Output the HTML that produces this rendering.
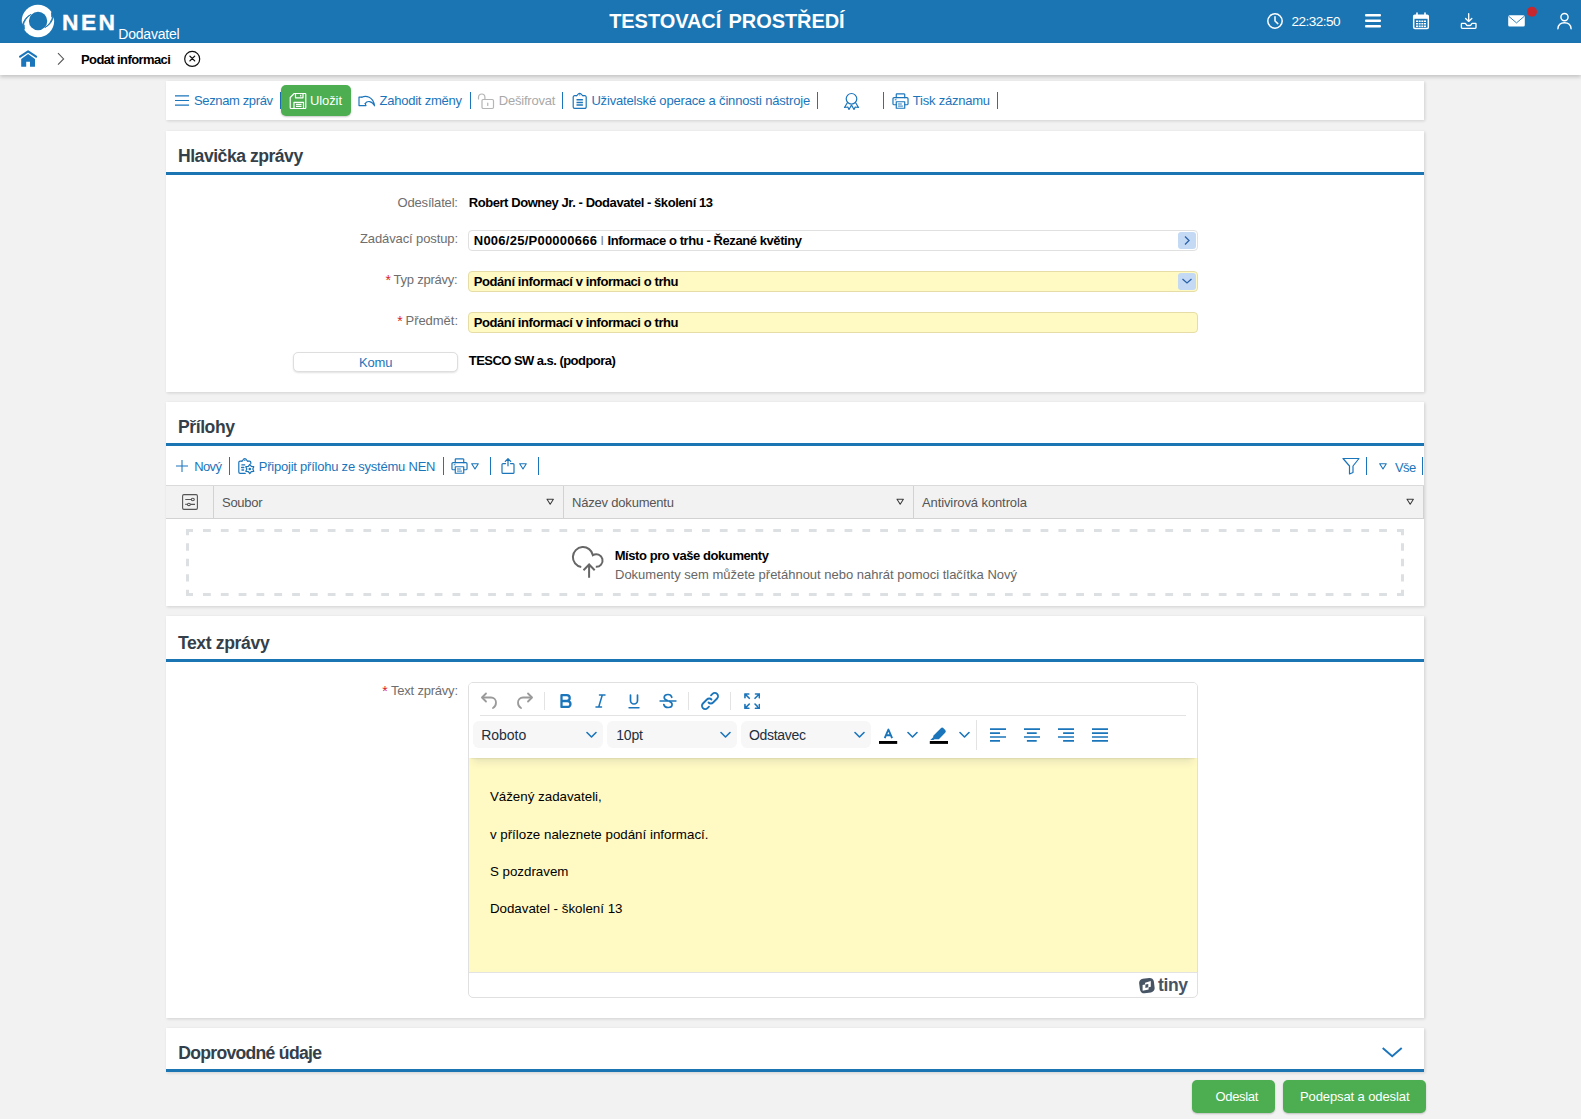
<!DOCTYPE html>
<html lang="cs"><head><meta charset="utf-8"><title>NEN - Podat informaci</title>
<style>
html,body{margin:0;padding:0}
body{width:1581px;height:1119px;overflow:hidden;background:#f2f2f2;font-family:"Liberation Sans",sans-serif;font-size:13px;position:relative}
.t{position:absolute;white-space:nowrap;line-height:20px;display:block}
.abs,svg.i,.sep{position:absolute}
.hdr{left:0;top:0;width:1581px;height:43px;background:#1b75b3}
.bc{left:0;top:43px;width:1581px;height:32px;background:#fff;box-shadow:0 2px 4px rgba(0,0,0,.2)}
.panel{left:166px;width:1258px;background:#fff;box-shadow:1px 1px 3px rgba(0,0,0,.14)}
.line{left:166px;width:1258px;height:3px;background:#1b75b3}
.sep{width:1px;background:#1b75bb}
.inp{left:468px;width:728px;height:19px;border:1px solid #e0e0e0;border-radius:4px;background:#fff}
.inp.y{background:#fff9c4;border-color:#e6dda6}
.arr{width:18px;height:17px;border-radius:3px;background:#c3d9f4}
.btn{background:#4cae50;border-radius:5px;box-shadow:0 1px 2px rgba(0,0,0,.22)}
.th{top:485px;height:34px;background:#f2f2f2;border-top:1px solid #dadada;border-bottom:1px solid #d2d2d2;box-sizing:border-box}
.dd{top:721px;height:27px;background:#f7f7f7;border-radius:6px}
.tsep{width:1px;background:#e3e3e3}
</style></head><body>
<div class="abs hdr"></div>
<div class="abs bc"></div>

<!-- logo -->
<svg class="i" style="left:21px;top:4px" width="34" height="34" viewBox="0 0 34 34">
<circle cx="16.96" cy="16.96" r="16.2" fill="#fff"/>
<circle cx="17.06" cy="16.96" r="9.2" fill="#1b75b3"/>
<path d="M0.300 22.300 L1.100 21.800 C2.300 17.500 5 12.500 9.800 10.500 C5.500 13 3.300 17.500 1.900 22 L1 23z" fill="#1b75b3" stroke="#1b75b3" stroke-width=".9"/>
<path d="M33.600 11.600 L32.800 12.100 C31.600 16.400 28.900 21.400 24.100 23.400 C28.400 20.900 30.600 16.400 32 11.900 L32.900 10.900z" fill="#1b75b3" stroke="#1b75b3" stroke-width=".9"/>
<path d="M1.300 21.800L3.600 20.500L3.900 25.800L1.700 24.600L0.500 22.500z" fill="#1b75b3"/>
<path d="M32.620 12.100L30.300 13.400L30 8.100L32.200 9.300L33.400 11.400z" fill="#1b75b3"/>
</svg>

<!-- header icons -->
<svg class="i" style="left:1266px;top:12px" width="18" height="18" viewBox="0 0 18 18" fill="none" stroke="#fff" stroke-width="1.5" stroke-linecap="round"><circle cx="9" cy="9" r="7.2"/><path d="M9 4.8V9l2.8 2.6"/></svg>
<svg class="i" style="left:1365px;top:14px" width="16" height="14" viewBox="0 0 16 14" fill="#fff"><rect x="0" y="0" width="16" height="2.6" rx="1"/><rect x="0" y="5.5" width="16" height="2.6" rx="1"/><rect x="0" y="11" width="16" height="2.6" rx="1"/></svg>
<svg class="i" style="left:1412px;top:12px" width="18" height="18" viewBox="0 0 18 18" fill="none" stroke="#fff"><rect x="1.7" y="3.2" width="14.6" height="13.3" rx="1.2" stroke-width="1.5"/><rect x="1.7" y="3.2" width="14.6" height="3.6" fill="#fff" stroke="none"/><path d="M5 1v4M13 1v4" stroke-width="1.6" stroke-linecap="round"/><path d="M4 9.3h10M4 11.8h10M4 14.3h10" stroke-width="1.5"/><path d="M6.5 8v7.5M9 8v7.5M11.5 8v7.5" stroke="#1b75b3" stroke-width=".7"/></svg>
<svg class="i" style="left:1460px;top:12px" width="18" height="18" viewBox="0 0 18 18" fill="none" stroke="#fff" stroke-width="1.350" stroke-linecap="round" stroke-linejoin="round"><path d="M8.700 1.700v7.400M5.600 6.400L8.700 9.400L11.800 6.400"/><path d="M1.900 11.400h3.200c.9 0 1.100 2.100 2.400 2.100h2.400c1.300 0 1.500-2.100 2.400-2.100h3.200c.3 0 .5.200.5.500v3.700c0 .5-.3.800-.8.800H2.200c-.5 0-.8-.3-.8-.8v-3.700c0-.3.200-.5.500-.5z"/></svg>
<svg class="i" style="left:1508px;top:15px" width="18" height="12" viewBox="0 0 18 12"><rect x=".2" y=".3" width="16.600" height="11.200" rx="1.500" fill="#fff"/><path d="M.6 1.200l7.900 6.700 7.900-6.700" stroke="#1b75b3" stroke-width=".9" fill="none"/></svg>
<svg class="i" style="left:1526px;top:6px" width="12" height="12" viewBox="0 0 12 12"><circle cx="6" cy="5.8" r="5" fill="#c8272d"/></svg>
<svg class="i" style="left:1556px;top:12px" width="18" height="18" viewBox="0 0 18 18" fill="none" stroke="#fff" stroke-width="1.400" stroke-linecap="round"><circle cx="8.500" cy="5.100" r="3.600"/><path d="M1.900 16.700c.3-4 3-6 6.600-6s6.300 2 6.600 6"/></svg>

<!-- breadcrumb icons -->
<svg class="i" style="left:19px;top:50px" width="19" height="17" viewBox="0 0 19 17"><path d="M1.100 6.700L9.100 1.300L17.100 6.700" fill="none" stroke="#1b75bb" stroke-width="2.100" stroke-linecap="round" stroke-linejoin="round"/><path d="M2.200 8.900L9.100 4.100L16 8.900V16.200a.6.600 0 0 1-.6.600H11V11.700H7.200V16.800H2.800a.6.600 0 0 1-.6-.600z" fill="#1b75bb"/></svg>
<svg class="i" style="left:56px;top:52px" width="10" height="14" viewBox="0 0 10 14" fill="none" stroke="#555" stroke-width="1.100"><path d="M2 1.200l5.600 5.700L2 12.600"/></svg>
<svg class="i" style="left:183px;top:50px" width="18" height="18" viewBox="0 0 18 18" fill="none" stroke="#111" stroke-linecap="round"><circle cx="9.200" cy="8.900" r="7.500" stroke-width="1.200"/><path d="M6.900 6.100l4.800 4.800M11.700 6.100l-4.800 4.800" stroke-width="1.300"/></svg>

<!-- toolbar panel -->
<div class="abs panel" style="top:81px;height:39px"></div>
<svg class="i" style="left:175px;top:95px" width="14" height="11" viewBox="0 0 14 11" stroke="#1b75bb" stroke-width="1.200"><path d="M0 .8h14M0 5.500h14M0 10.200h14"/></svg>
<div class="sep" style="left:280px;top:92px;height:17px"></div>
<div class="abs btn" style="left:281px;top:85px;width:70px;height:31px"></div>
<svg class="i" style="left:289px;top:92px" width="18" height="18" viewBox="0 0 18 18" fill="none" stroke="#fff" stroke-width="1.200" stroke-linejoin="round"><path d="M5.200 1.500H16a.8.8 0 0 1 .8.800V15.700a.8.8 0 0 1-.8.800H2a.8.8 0 0 1-.8-.800V5.500z"/><path d="M6.500 1.500v4.300h7.500V1.500M11.700 2.700v1.900"/><path d="M5 16.500V10.300h9.500v6.200M7 12.300h5.500M7 14.300h5.500"/></svg>
<svg class="i" style="left:358px;top:95px" width="18" height="13" viewBox="0 0 18 13" fill="none" stroke="#1b75bb" stroke-width="1.200" stroke-linejoin="round" stroke-linecap="round"><path d="M3.800 2.200L1 2.100V10.600H8L7.200 8.600"/><path d="M3.800 2.200C8 0.300 15 1.500 16.600 10.800C14 5.500 9 5.500 7.200 8.600"/></svg>
<div class="sep" style="left:469.500px;top:92px;height:17px"></div>
<svg class="i" style="left:477px;top:92px" width="18" height="18" viewBox="0 0 18 18" fill="none" stroke="#b5b5b5" stroke-width="1.200" stroke-linecap="round"><rect x="5" y="7.500" width="11.500" height="9" rx="1.200"/><path d="M1.500 7V5.200a3.200 3.200 0 0 1 6.400 0V7.500M10.750 11v2.500"/></svg>
<div class="sep" style="left:562px;top:92px;height:17px"></div>
<svg class="i" style="left:572px;top:92px" width="16" height="18" viewBox="0 0 16 18" fill="none" stroke="#1b75bb" stroke-width="1.200" stroke-linejoin="round" stroke-linecap="round"><path d="M4.400 3.700H2.600a1.400 1.400 0 0 0-1.400 1.400V15a1.400 1.400 0 0 0 1.400 1.400H12.800a1.400 1.400 0 0 0 1.400-1.400V5.100a1.400 1.400 0 0 0-1.400-1.400H11"/><path d="M4.400 3.700C5.700 3.700 5.500 1.300 7.700 1.300S9.700 3.700 11 3.700"/><path d="M4.500 7.700h6.400M4.500 10.400h6.400M4.500 13.100h6.400" stroke-width="1.500" stroke-linecap="butt"/><path d="M7.400 2.900h.6" stroke-width=".9"/></svg>
<div class="sep" style="left:817px;top:92px;height:17px"></div>
<svg class="i" style="left:843px;top:92px" width="17" height="18" viewBox="0 0 17 18" fill="none" stroke="#1b75bb" stroke-width="1.200" stroke-linejoin="round"><circle cx="8.500" cy="6.800" r="5.300"/><path d="M4.500 10.500L1.500 15.500l3.300-.5 1.200 2.500 2.500-4.500M12.500 10.500l3 5-3.300-.5-1.200 2.500-2.500-4.500"/></svg>
<div class="sep" style="left:883px;top:92px;height:17px"></div>
<svg class="i" style="left:891.500px;top:93px" width="17" height="16" viewBox="0 0 18 17" fill="none" stroke="#1b75bb" stroke-width="1.250" stroke-linejoin="round" stroke-linecap="round"><path d="M4.500 5V1.600a.6.600 0 0 1 .6-.600h7.800a.6.600 0 0 1 .6.600V5"/><path d="M4.500 12.500H2.200a1.200 1.200 0 0 1-1.200-1.200V6.200A1.200 1.200 0 0 1 2.200 5h13.600a1.200 1.200 0 0 1 1.200 1.200v5.100a1.200 1.200 0 0 1-1.200 1.200H13.500"/><path d="M4.500 9.300h9v6.900h-9z"/><path d="M6.800 11.700h3.200M6.800 13.900h4.400M3.300 7.200h1" stroke-width="1"/></svg>
<div class="sep" style="left:997px;top:92px;height:17px"></div>

<!-- panel 1 -->
<div class="abs panel" style="top:131px;height:261px"></div>
<div class="abs line" style="top:172px"></div>
<div class="abs inp" style="top:230px"></div>
<div class="abs arr" style="left:1178px;top:232px"></div>
<svg class="i" style="left:1183px;top:235px" width="8" height="11" viewBox="0 0 8 11" fill="none" stroke="#2a62a8" stroke-width="1.300"><path d="M2 1.500l4 4-4 4"/></svg>
<div class="abs inp y" style="top:271px"></div>
<div class="abs arr" style="left:1178px;top:273px"></div>
<svg class="i" style="left:1181px;top:277px" width="12" height="8" viewBox="0 0 12 8" fill="none" stroke="#2a62a8" stroke-width="1.300"><path d="M1.500 2l4.500 4 4.500-4"/></svg>
<div class="abs inp y" style="top:312px"></div>
<div class="abs" style="left:293px;top:352px;width:163px;height:18px;border:1px solid #dedede;border-radius:5px;background:#fff;box-shadow:0 1px 2px rgba(0,0,0,.12)"></div>

<!-- panel 2 -->
<div class="abs panel" style="top:402px;height:204px"></div>
<div class="abs line" style="top:443px"></div>
<svg class="i" style="left:175.500px;top:459.500px" width="12" height="12" viewBox="0 0 12 12" stroke="#1b75bb" stroke-width="1.050"><path d="M6 0v12M0 6h12"/></svg>
<div class="sep" style="left:229px;top:457px;height:18px"></div>
<svg class="i" style="left:237px;top:457px" width="18" height="18" viewBox="0 0 18 18" fill="none" stroke="#1b75bb" stroke-width="1.200" stroke-linejoin="round" stroke-linecap="round"><path d="M4.800 4.200H3.100a1.300 1.300 0 0 0-1.300 1.300V15a1.300 1.300 0 0 0 1.300 1.300h5.200M10.800 4.200h1.700a1.300 1.300 0 0 1 1.300 1.300V6.500"/><path d="M4.800 4.200C6 4.200 5.700 1.600 7.800 1.600S9.600 4.200 10.800 4.200"/><path d="M4.900 7.900h2.800M4.600 10.500h2.200M4.900 13h1.700" stroke-width="1.300"/><path d="M7.400 3.200h.8" stroke-width="1"/><path d="M12.80 7.40L11.30 9.40L8.82 9.70L9.80 12.00L8.82 14.30L11.30 14.60L12.80 16.60L14.30 14.60L16.78 14.30L15.80 12.00L16.78 9.70L14.30 9.40z" stroke-width="1.200"/><circle cx="12.8" cy="12.0" r="1.300" fill="#1b75bb" stroke="none"/></svg>
<div class="sep" style="left:443px;top:457px;height:18px"></div>
<svg class="i" style="left:451px;top:458px" width="17" height="16" viewBox="0 0 18 17" fill="none" stroke="#1b75bb" stroke-width="1.250" stroke-linejoin="round" stroke-linecap="round"><path d="M4.500 5V1.600a.6.600 0 0 1 .6-.600h7.800a.6.600 0 0 1 .6.600V5"/><path d="M4.500 12.500H2.200a1.200 1.200 0 0 1-1.200-1.200V6.200A1.200 1.200 0 0 1 2.200 5h13.600a1.200 1.200 0 0 1 1.200 1.200v5.100a1.200 1.200 0 0 1-1.200 1.200H13.500"/><path d="M4.500 9.300h9v6.900h-9z"/><path d="M6.800 11.700h3.200M6.800 13.900h4.400M3.300 7.200h1" stroke-width="1"/></svg>
<svg class="i" style="left:471.2px;top:463px" width="8" height="7" viewBox="0 0 8 7" fill="none" stroke="#1b75bb" stroke-width="1.100" stroke-linejoin="round"><path d="M.7.700h6.600L4 6z"/></svg>
<div class="sep" style="left:490px;top:457px;height:18px"></div>
<svg class="i" style="left:501px;top:458px" width="14" height="17" viewBox="0 0 14 17" fill="none" stroke="#1b75bb" stroke-width="1.200" stroke-linejoin="round" stroke-linecap="round"><path d="M4.500 5.600H2a1 1 0 0 0-1 1V14.400a1 1 0 0 0 1 1H12a1 1 0 0 0 1-1V6.600a1 1 0 0 0-1-1H9.500"/><path d="M7 7.800V.9M4.300 3.400L7 .700L9.700 3.400"/></svg>
<svg class="i" style="left:519.3px;top:463px" width="8" height="7" viewBox="0 0 8 7" fill="none" stroke="#1b75bb" stroke-width="1.100" stroke-linejoin="round"><path d="M.7.700h6.600L4 6z"/></svg>
<div class="sep" style="left:538px;top:457px;height:18px"></div>
<!-- right side filter -->
<svg class="i" style="left:1342px;top:457px" width="18" height="18" viewBox="0 0 18 18" fill="none" stroke="#1b75bb" stroke-width="1.200" stroke-linejoin="round"><path d="M1 1.500h16L11 9v6.500L7.500 17V9z"/></svg>
<div class="sep" style="left:1366px;top:457px;height:18px"></div>
<svg class="i" style="left:1379px;top:463px" width="8" height="7" viewBox="0 0 8 7" fill="none" stroke="#1b75bb" stroke-width="1.100" stroke-linejoin="round"><path d="M.7.700h6.600L4 6z"/></svg>
<div class="sep" style="left:1422px;top:457px;height:18px"></div>
<!-- table header -->
<div class="abs th" style="left:166px;width:1258px"></div>
<div class="abs" style="left:213px;top:486px;width:1px;height:32px;background:#d2d2d2"></div>
<div class="abs" style="left:563px;top:486px;width:1px;height:32px;background:#d2d2d2"></div>
<div class="abs" style="left:913px;top:486px;width:1px;height:32px;background:#d2d2d2"></div>
<div class="abs" style="left:1423px;top:486px;width:1px;height:32px;background:#d2d2d2"></div>
<svg class="i" style="left:182px;top:494px" width="16" height="16" viewBox="0 0 16 16" fill="none" stroke="#555" stroke-width="1.100"><rect x=".6" y=".6" width="14.800" height="14.800" rx="1.300"/><path d="M3.300 5.500h6M3.300 10.400h1.500M8.400 10.400h4.600"/><ellipse cx="10.800" cy="5.500" rx="1.500" ry="1.200"/><ellipse cx="6.900" cy="10.400" rx="1.500" ry="1.200"/></svg>
<svg class="i" style="left:545.6px;top:498px" width="9" height="8" viewBox="0 0 9 8" fill="none" stroke="#3c3c3c" stroke-width="1.050" stroke-linejoin="round"><path d="M1 1.200h6.400L4.200 6.300z"/></svg>
<svg class="i" style="left:895.6px;top:498px" width="9" height="8" viewBox="0 0 9 8" fill="none" stroke="#3c3c3c" stroke-width="1.050" stroke-linejoin="round"><path d="M1 1.200h6.400L4.200 6.300z"/></svg>
<svg class="i" style="left:1405.6px;top:498px" width="9" height="8" viewBox="0 0 9 8" fill="none" stroke="#3c3c3c" stroke-width="1.050" stroke-linejoin="round"><path d="M1 1.200h6.400L4.200 6.300z"/></svg>
<!-- dropzone -->
<svg class="i" style="left:186px;top:529px" width="1218" height="67" viewBox="0 0 1218 67" fill="none" stroke="#dde0e3" stroke-width="3"><path d="M0 1.500H1218" stroke-dasharray="7.800 10.020" stroke-dashoffset=".8"/><path d="M0 65.500H1218" stroke-dasharray="7.800 10.020" stroke-dashoffset=".8"/><path d="M1.500 0V67" stroke-dasharray="7.400 8.070" stroke-dashoffset="1.200"/><path d="M1216.500 0V67" stroke-dasharray="7.400 8.070" stroke-dashoffset="1.200"/></svg>
<svg class="i" style="left:570px;top:545px" width="36" height="35" viewBox="0 0 36 35" fill="none" stroke="#666" stroke-width="2" stroke-linejoin="miter"><path d="M11.250 22.100A10.100 10.100 0 1 1 22.900 10.200A6.300 6.300 0 1 1 25.800 21.800"/><path d="M19.100 32.800V19.800M13.500 25.200L19.100 19.500L24.700 25.200"/></svg>

<!-- panel 3 -->
<div class="abs panel" style="top:616px;height:402px"></div>
<div class="abs line" style="top:659px"></div>
<div class="abs" style="left:468px;top:682px;width:728px;height:314px;border:1px solid #e0e0e0;border-radius:5px;background:#fff;overflow:hidden">
  <div class="abs" style="left:0;top:75px;width:728px;height:214px;background:#fff9c4"></div>
  <div class="abs" style="left:0;top:289px;width:728px;height:1px;background:#e3e3e3"></div>
  <div class="abs" style="left:0;top:0;width:728px;height:75px;background:#fff;box-shadow:0 2px 2px -2px rgba(34,47,62,.2),0 8px 8px -4px rgba(34,47,62,.1)"></div>
</div>
<div class="abs" style="left:480px;top:715px;width:706px;height:1px;background:#e3e3e3"></div>
<!-- row1 icons -->
<svg class="i" style="left:480px;top:691px" width="19" height="19" viewBox="0 0 19 19" fill="none" stroke="#9a9a9a" stroke-width="1.800" stroke-linecap="round" stroke-linejoin="round"><path d="M6 2.500L2 6.500l4 4"/><path d="M2.500 6.500h8.500a5 5 0 0 1 5 5c0 2.500-1.200 4.500-3 5.500"/></svg>
<svg class="i" style="left:515px;top:691px" width="19" height="19" viewBox="0 0 19 19" fill="none" stroke="#9a9a9a" stroke-width="1.800" stroke-linecap="round" stroke-linejoin="round"><path d="M13 2.500l4 4-4 4"/><path d="M16.500 6.500H8a5 5 0 0 0-5 5c0 2.500 1.200 4.500 3 5.500"/></svg>
<div class="abs tsep" style="left:544px;top:692px;height:18px"></div>
<svg class="i" style="left:560px;top:694px" width="13" height="14" viewBox="0 0 13 14" fill="none" stroke="#1b75bb" stroke-width="2.300" stroke-linejoin="round"><path d="M1.500 1.200h5.300a2.900 2.900 0 0 1 0 5.800H1.500zM1.500 7h6a3 3 0 0 1 0 6h-6z"/></svg>
<svg class="i" style="left:595px;top:694px" width="11" height="14" viewBox="0 0 11 14" fill="none" stroke="#1b75bb" stroke-width="1.500" stroke-linecap="round"><path d="M4.500 1h5.500M1 13h5.500M7.300 1L3.700 13"/></svg>
<svg class="i" style="left:628px;top:694px" width="12" height="15" viewBox="0 0 12 15" fill="none" stroke="#1b75bb" stroke-width="1.700" stroke-linecap="round"><path d="M2.500 1v5.500a3.500 3.500 0 0 0 7 0V1"/><path d="M1 13.700h10" stroke-width="1.400"/></svg>
<svg class="i" style="left:659px;top:693px" width="18" height="16" viewBox="0 0 18 16" fill="none" stroke="#1b75bb" stroke-width="1.700" stroke-linecap="round"><path d="M12.800 4.300C12.300 2.300 10.800 1.500 9 1.500c-2.200 0-3.800 1.200-3.800 3 0 1.500 1 2.300 3.300 3"/><path d="M10.500 8.500c1.800.7 2.600 1.600 2.600 3 0 1.900-1.700 3-4 3-2.200 0-3.900-1-4.300-3"/><path d="M1 8h16" stroke-width="1.400"/></svg>
<div class="abs tsep" style="left:688px;top:692px;height:18px"></div>
<svg class="i" style="left:700px;top:691px" width="20" height="20" viewBox="0 0 20 20" fill="none" stroke="#1b75bb" stroke-width="1.800" stroke-linecap="round"><path d="M8.500 11.500a3.200 3.200 0 0 0 4.600 0l4-4a3.200 3.200 0 0 0-4.600-4.600l-1.500 1.500"/><path d="M11.500 8.500a3.200 3.200 0 0 0-4.600 0l-4 4a3.200 3.200 0 0 0 4.600 4.600l1.500-1.500"/></svg>
<div class="abs tsep" style="left:730px;top:692px;height:18px"></div>
<svg class="i" style="left:744px;top:693px" width="16.300" height="16.300" viewBox="0 0 17 17" fill="none" stroke="#1b75bb" stroke-width="1.700" stroke-linejoin="round" stroke-linecap="round"><path d="M1 5V1h4M1 1l4.500 4.500M12 1h4v4M16 1l-4.500 4.500M1 12v4h4M1 16l4.500-4.500M16 12v4h-4M16 16l-4.500-4.500"/></svg>
<!-- row2 -->
<div class="abs dd" style="left:473px;width:130px"></div>
<div class="abs dd" style="left:607px;width:130px"></div>
<div class="abs dd" style="left:741px;width:130px"></div>
<svg class="i" style="left:586px;top:731px" width="11" height="8" viewBox="0 0 11 8" fill="none" stroke="#1b75bb" stroke-width="1.600" stroke-linecap="round" stroke-linejoin="round"><path d="M1 1.500L5.500 6 10 1.500"/></svg>
<svg class="i" style="left:720px;top:731px" width="11" height="8" viewBox="0 0 11 8" fill="none" stroke="#1b75bb" stroke-width="1.600" stroke-linecap="round" stroke-linejoin="round"><path d="M1 1.500L5.500 6 10 1.500"/></svg>
<svg class="i" style="left:854px;top:731px" width="11" height="8" viewBox="0 0 11 8" fill="none" stroke="#1b75bb" stroke-width="1.600" stroke-linecap="round" stroke-linejoin="round"><path d="M1 1.500L5.500 6 10 1.500"/></svg>
<!-- text color -->
<svg class="i" style="left:879px;top:727px" width="19" height="18" viewBox="0 0 19 18"><path d="M5.700 11.200L9.400 2.500L13.100 11.200M6.900 8.300h5" fill="none" stroke="#1b75bb" stroke-width="1.900" stroke-linejoin="round"/><rect x="0" y="14" width="18.200" height="2.900" fill="#000"/></svg>
<svg class="i" style="left:907px;top:731px" width="11" height="8" viewBox="0 0 11 8" fill="none" stroke="#1b75bb" stroke-width="1.600" stroke-linecap="round" stroke-linejoin="round"><path d="M1 1.500L5.500 6 10 1.500"/></svg>
<svg class="i" style="left:929px;top:726px" width="20" height="19" viewBox="0 0 20 19"><path d="M4.300 9.800L11.800 2.300a1.900 1.900 0 0 1 2.700 0l1.700 1.700a1.900 1.900 0 0 1 0 2.700L9.800 13.200H5.600L4.300 14H1.300l2.900-2.800z" fill="#1b75bb"/><rect x=".8" y="15" width="18.200" height="2.900" fill="#000"/></svg>
<svg class="i" style="left:959px;top:731px" width="11" height="8" viewBox="0 0 11 8" fill="none" stroke="#1b75bb" stroke-width="1.600" stroke-linecap="round" stroke-linejoin="round"><path d="M1 1.500L5.500 6 10 1.500"/></svg>
<div class="abs tsep" style="left:976px;top:720px;height:30px"></div>
<svg class="i" style="left:990.2px;top:728px" width="16" height="14" viewBox="0 0 16 14" stroke="#1b75bb" stroke-width="1.700"><path d="M0 1.200h16M0 9h16M0 5.100h10M0 12.800h10"/></svg>
<svg class="i" style="left:1024.2px;top:728px" width="16" height="14" viewBox="0 0 16 14" stroke="#1b75bb" stroke-width="1.700"><path d="M0 1.200h16M0 9h16M2.900 5.100h9.800M2.900 12.800h9.800"/></svg>
<svg class="i" style="left:1058.2px;top:728px" width="16" height="14" viewBox="0 0 16 14" stroke="#1b75bb" stroke-width="1.700"><path d="M0 1.200h16M0 9h16M5.100 5.100h10.900M5.100 12.800h10.900"/></svg>
<svg class="i" style="left:1092.2px;top:728px" width="16" height="14" viewBox="0 0 16 14" stroke="#1b75bb" stroke-width="1.700"><path d="M0 1.200h16M0 9h16M0 5.100h16M0 12.800h16"/></svg>
<!-- tiny logo -->
<svg class="i" style="left:1139px;top:977px" width="17" height="17" viewBox="0 0 17 17"><rect x=".5" y="1.300" width="14.800" height="14.600" rx="4.200" fill="#465464" transform="rotate(-7 7.900 8.600)"/><path d="M6.050 5.840L11.800 4.070V9.820L6.050 11.150z" fill="#fff"/><path d="M3.600 8.050L9.600 6.700V12.500L3.600 13.800z" fill="#fff"/><path d="M6.400 7.600L9.300 6.950V10.300L6.400 10.950z" fill="#465464"/></svg>

<!-- panel 4 -->
<div class="abs panel" style="top:1028px;height:44px"></div>
<div class="abs line" style="top:1069px"></div>
<svg class="i" style="left:1381px;top:1045px" width="22" height="14" viewBox="0 0 22 14" fill="none" stroke="#1b75bb" stroke-width="1.900"><path d="M1.700 3L11.200 11.300L20.700 3"/></svg>

<!-- bottom buttons -->
<div class="abs btn" style="left:1192px;top:1080px;width:83px;height:33px"></div>
<div class="abs btn" style="left:1283px;top:1080px;width:143px;height:33px"></div>

<span id="nen" class="t" style="left:62.00px;top:12px;font-size:22.8px;font-weight:700;color:#fff;letter-spacing:2.430px;-webkit-text-stroke:.35px #fff;">NEN</span>
<span id="dod" class="t" style="left:118.30px;top:24px;font-size:14px;font-weight:400;color:#fff;letter-spacing:-0.218px;">Dodavatel</span>
<span id="title" class="t" style="left:609.20px;top:11px;font-size:20px;font-weight:700;color:#fff;letter-spacing:-0.064px;word-spacing:1.8px;">TESTOVACÍ PROSTŘEDÍ</span>
<span id="time" class="t" style="left:1291.40px;top:12px;font-size:13.6px;font-weight:400;color:#fff;letter-spacing:-0.546px;">22:32:50</span>
<span id="bc" class="t" style="left:81.00px;top:50px;font-size:13px;font-weight:700;color:#000;letter-spacing:-0.604px;">Podat informaci</span>
<span id="tb1" class="t" style="left:194.00px;top:91px;font-size:13px;font-weight:400;color:#1b75bb;letter-spacing:-0.372px;">Seznam zpráv</span>
<span id="tb2" class="t" style="left:310.00px;top:91px;font-size:13px;font-weight:400;color:#fff;letter-spacing:-0.103px;">Uložit</span>
<span id="tb3" class="t" style="left:379.50px;top:91px;font-size:13px;font-weight:400;color:#1b75bb;letter-spacing:-0.230px;">Zahodit změny</span>
<span id="tb4" class="t" style="left:498.75px;top:91px;font-size:13px;font-weight:400;color:#a9a9a9;letter-spacing:-0.220px;">Dešifrovat</span>
<span id="tb5" class="t" style="left:591.40px;top:91px;font-size:13px;font-weight:400;color:#1b75bb;letter-spacing:-0.175px;">Uživatelské operace a činnosti nástroje</span>
<span id="tb6" class="t" style="left:912.80px;top:91px;font-size:13px;font-weight:400;color:#1b75bb;letter-spacing:-0.220px;">Tisk záznamu</span>
<span id="h1" class="t" style="left:178.00px;top:146px;font-size:17.6px;font-weight:700;color:#343f4a;letter-spacing:-0.489px;">Hlavička zprávy</span>
<span id="h2" class="t" style="left:178.00px;top:417px;font-size:17.6px;font-weight:700;color:#343f4a;letter-spacing:-0.440px;">Přílohy</span>
<span id="h3" class="t" style="left:177.90px;top:633px;font-size:17.6px;font-weight:700;color:#343f4a;letter-spacing:-0.372px;">Text zprávy</span>
<span id="h4" class="t" style="left:178.20px;top:1043px;font-size:17.6px;font-weight:700;color:#343f4a;letter-spacing:-0.710px;">Doprovodné údaje</span>
<span id="l1" class="t" style="left:397.50px;top:193px;font-size:13px;font-weight:400;color:#6e6e6e;letter-spacing:-0.166px;">Odesílatel:</span>
<span id="l2" class="t" style="left:360.00px;top:229px;font-size:13px;font-weight:400;color:#6e6e6e;letter-spacing:-0.116px;">Zadávací postup:</span>
<span id="l3" class="t" style="left:393.60px;top:270px;font-size:13px;font-weight:400;color:#6e6e6e;letter-spacing:-0.247px;">Typ zprávy:</span>
<span id="l3s" class="t" style="left:385.60px;top:270px;font-size:14px;font-weight:400;color:#d8232a;letter-spacing:0.000px;">*</span>
<span id="l4" class="t" style="left:405.50px;top:311px;font-size:13px;font-weight:400;color:#6e6e6e;letter-spacing:-0.036px;">Předmět:</span>
<span id="l4s" class="t" style="left:397.30px;top:311px;font-size:14px;font-weight:400;color:#d8232a;letter-spacing:0.000px;">*</span>
<span id="v1" class="t" style="left:468.75px;top:193px;font-size:13px;font-weight:700;color:#000;letter-spacing:-0.439px;">Robert Downey Jr. - Dodavatel - školení 13</span>
<span id="v2a" class="t" style="left:473.75px;top:231px;font-size:13px;font-weight:700;color:#000;letter-spacing:0.248px;">N006/25/P00000666</span>
<span id="v2b" class="t" style="left:600.50px;top:231px;font-size:12px;font-weight:400;color:#777;letter-spacing:0.000px;">I</span>
<span id="v2c" class="t" style="left:607.50px;top:231px;font-size:13px;font-weight:700;color:#000;letter-spacing:-0.424px;">Informace o trhu - Řezané květiny</span>
<span id="v3" class="t" style="left:473.75px;top:272px;font-size:13px;font-weight:700;color:#000;letter-spacing:-0.415px;">Podání informací v informaci o trhu</span>
<span id="v4" class="t" style="left:473.75px;top:313px;font-size:13px;font-weight:700;color:#000;letter-spacing:-0.415px;">Podání informací v informaci o trhu</span>
<span id="komu" class="t" style="left:359.00px;top:353px;font-size:13px;font-weight:400;color:#1b75bb;letter-spacing:-0.156px;">Komu</span>
<span id="v5" class="t" style="left:468.75px;top:351px;font-size:13px;font-weight:700;color:#000;letter-spacing:-0.541px;">TESCO SW a.s. (podpora)</span>
<span id="a1" class="t" style="left:194.25px;top:457px;font-size:13px;font-weight:400;color:#1b75bb;letter-spacing:-0.625px;">Nový</span>
<span id="a2" class="t" style="left:258.75px;top:457px;font-size:13px;font-weight:400;color:#1b75bb;letter-spacing:-0.226px;">Připojit přílohu ze systému NEN</span>
<span id="a3" class="t" style="left:1395.00px;top:458px;font-size:13px;font-weight:400;color:#1b75bb;letter-spacing:-0.603px;">Vše</span>
<span id="c1" class="t" style="left:222.00px;top:493px;font-size:13px;font-weight:400;color:#555;letter-spacing:-0.284px;">Soubor</span>
<span id="c2" class="t" style="left:572.00px;top:493px;font-size:13px;font-weight:400;color:#555;letter-spacing:-0.199px;">Název dokumentu</span>
<span id="c3" class="t" style="left:922.00px;top:493px;font-size:13px;font-weight:400;color:#555;letter-spacing:-0.109px;">Antivirová kontrola</span>
<span id="d1" class="t" style="left:614.70px;top:546px;font-size:13px;font-weight:700;color:#000;letter-spacing:-0.421px;">Místo pro vaše dokumenty</span>
<span id="d2" class="t" style="left:615.00px;top:565px;font-size:13px;font-weight:400;color:#666;letter-spacing:-0.008px;">Dokumenty sem můžete přetáhnout nebo nahrát pomoci tlačítka Nový</span>
<span id="l5" class="t" style="left:391.00px;top:681px;font-size:13px;font-weight:400;color:#6e6e6e;letter-spacing:-0.214px;">Text zprávy:</span>
<span id="l5s" class="t" style="left:382.30px;top:681px;font-size:14px;font-weight:400;color:#d8232a;letter-spacing:0.000px;">*</span>
<span id="s1" class="t" style="left:481.25px;top:725px;font-size:14px;font-weight:400;color:#222f3e;letter-spacing:-0.031px;">Roboto</span>
<span id="s2" class="t" style="left:616.25px;top:725px;font-size:14px;font-weight:400;color:#222f3e;letter-spacing:-0.167px;">10pt</span>
<span id="s3" class="t" style="left:749.00px;top:725px;font-size:14px;font-weight:400;color:#222f3e;letter-spacing:-0.306px;">Odstavec</span>
<span id="e1" class="t" style="left:489.90px;top:787px;font-size:13.333px;font-weight:400;color:#000;letter-spacing:0.000px;">Vážený zadavateli,</span>
<span id="e2" class="t" style="left:489.90px;top:825px;font-size:13.333px;font-weight:400;color:#000;letter-spacing:0.000px;">v příloze naleznete podání informací.</span>
<span id="e3" class="t" style="left:489.90px;top:862px;font-size:13.333px;font-weight:400;color:#000;letter-spacing:0.000px;">S pozdravem</span>
<span id="e4" class="t" style="left:489.90px;top:899px;font-size:13.333px;font-weight:400;color:#000;letter-spacing:0.000px;">Dodavatel - školení 13</span>
<span id="tiny" class="t" style="left:1158.10px;top:975px;font-size:17.5px;font-weight:700;color:#465464;letter-spacing:-0.408px;">tiny</span>
<span id="b1" class="t" style="left:1215.40px;top:1087px;font-size:13px;font-weight:400;color:#fff;letter-spacing:-0.302px;">Odeslat</span>
<span id="b2" class="t" style="left:1300.00px;top:1087px;font-size:13px;font-weight:400;color:#fff;letter-spacing:-0.107px;">Podepsat a odeslat</span>
</body></html>
